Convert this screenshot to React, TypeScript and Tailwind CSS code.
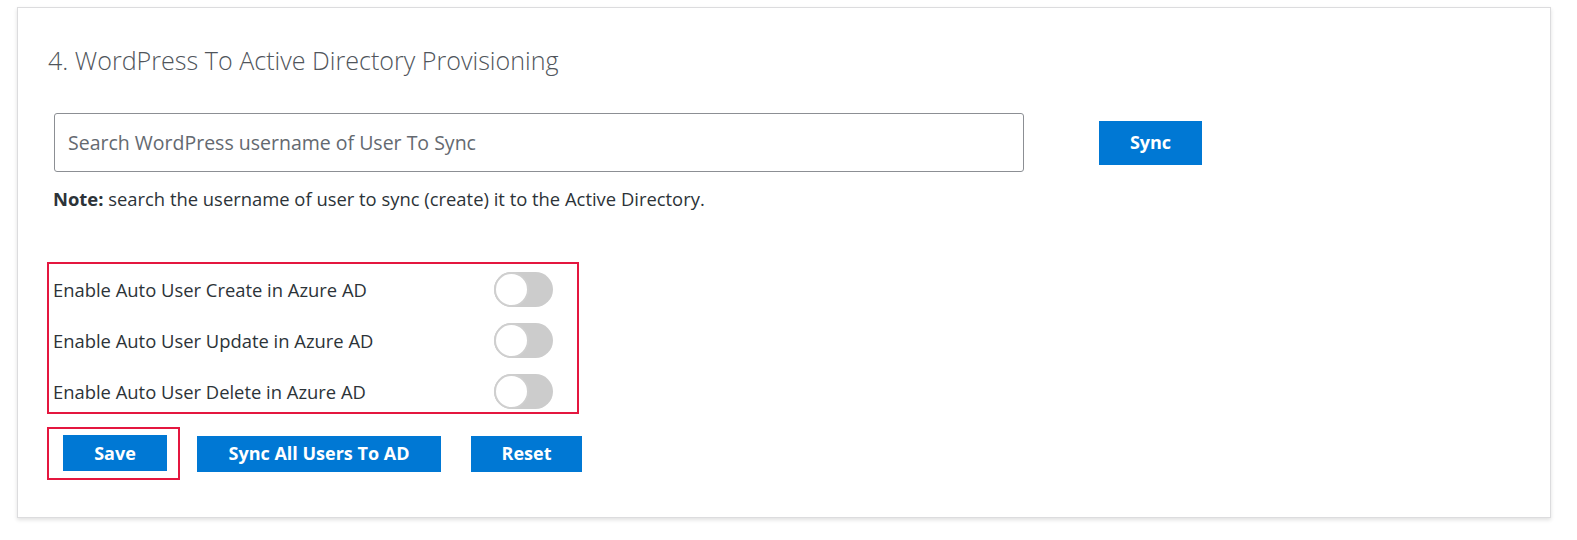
import React from "react";

function Toggle() {
  return (
    <div className="relative w-[59px] h-[35px] rounded-full bg-[#cccccc]">
      <div className="absolute left-0 top-0 w-[35px] h-[35px] rounded-full bg-white border-[2px] border-[#cfcfcf]" />
    </div>
  );
}

const rows = [
  "Enable Auto User Create in Azure AD",
  "Enable Auto User Update in Azure AD",
  "Enable Auto User Delete in Azure AD",
];

export default function App() {
  return (
    <div
      className="bg-white w-[1577px] h-[540px] pt-[7px] pl-[17px]"
      style={{ fontFamily: '"Open Sans", "Noto Sans", sans-serif' }}
    >
      <div className="w-[1534px] h-[511px] bg-white border border-[#dcdcde] shadow-[0_2px_4px_rgba(0,0,0,0.12)] pl-[29px] pt-[36px]">
        <h2 className="ml-[1px] text-[25.1px] leading-[32px] text-[#50555b] font-light">
          4. WordPress To Active Directory Provisioning
        </h2>
        <div className="flex items-center mt-[37px]">
          <div className="ml-[7px] w-[970px] h-[59px] border border-[#8c8f94] rounded-[3px] flex items-center pl-[13px]">
            <span className="text-[19.5px] text-[#646970]">
              Search WordPress username of User To Sync
            </span>
          </div>
          <button className="ml-[75px] w-[103px] h-[44px] bg-[#0078d4] text-white font-bold text-[18px]">
            Sync
          </button>
        </div>
        <p className="ml-[6px] mt-[14px] text-[18.4px] leading-[26px] text-[#2c3338]">
          <span className="font-bold">Note:</span> search the username of user to sync (create) it to the Active Directory.
        </p>
        <div className="mt-[50px] w-[532px] border-2 border-[#e4173f] pt-[8px] pb-[3px] pl-[4px] pr-[24px] flex flex-col gap-[16px]">
          {rows.map((r) => (
            <div key={r} className="h-[35px] flex items-center justify-between">
              <span className="text-[18.4px] text-[#2c3338]">{r}</span>
              <Toggle />
            </div>
          ))}
        </div>
        <div className="flex items-center mt-[13px]">
          <div className="w-[133px] h-[53px] border-2 border-[#e4173f] pl-[14px] pt-[6px]">
            <button className="w-[104px] h-[36px] bg-[#0078d4] text-white font-bold text-[18px]">
              Save
            </button>
          </div>
          <button className="ml-[17px] w-[244px] h-[36px] bg-[#0078d4] text-white font-bold text-[18px]">
            Sync All Users To AD
          </button>
          <button className="ml-[30px] w-[111px] h-[36px] bg-[#0078d4] text-white font-bold text-[18px]">
            Reset
          </button>
        </div>
      </div>
    </div>
  );
}
